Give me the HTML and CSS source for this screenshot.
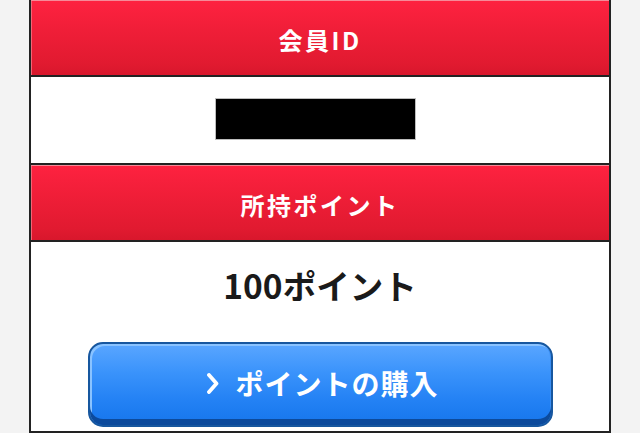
FILE: index.html
```html
<!DOCTYPE html>
<html lang="ja">
<head>
<meta charset="utf-8">
<title>会員情報</title>
<link rel="stylesheet" href="styles.css">
</head>
<body>
<div class="page">
  <div class="panel">
    <div class="head">会員ID</div>
    <div class="cell id-cell">
      <div class="masked"></div>
    </div>
    <div class="head">所持ポイント</div>
    <div class="cell points-cell">
      <div class="points">100ポイント</div>
      <a class="buy" href="#">
        <svg class="chev" width="12" height="21" viewBox="0 0 12 21" aria-hidden="true">
          <path d="M2 2 L9.5 10.5 L2 19" fill="none" stroke="#fff" stroke-width="3.8" stroke-linecap="round" stroke-linejoin="round"/>
        </svg>
        <span>ポイントの購入</span>
      </a>
    </div>
  </div>
</div>
</body>
</html>
```
FILE: styles.css
```css
html, body {
  margin: 0;
  padding: 0;
  background: #f3f3f3;
  font-family: "Noto Sans CJK JP", "Noto Sans", sans-serif;
  overflow: hidden;
}
.page {
  width: 640px;
  height: 433px;
  display: flex;
  justify-content: center;
}
.panel {
  width: 578px;
  margin-top: -2px;
  border-left: 2px solid #222;
  border-right: 2px solid #222;
  border-top: 2px solid #222;
  display: flex;
  flex-direction: column;
  background: #fff;
}
.head {
  height: 77px;
  flex: none;
  border-bottom: 2px solid #222;
  background: linear-gradient(#fe2240 0%, #f01e38 40%, #e11a30 85%, #d8172c 100%);
  box-shadow: inset 0 1px 0 #f58a98, inset 1px 0 0 #f36576;
  color: #fff;
  font-weight: 700;
  font-size: 24px;
  letter-spacing: 2.5px;
  display: flex;
  align-items: center;
  justify-content: center;
  padding-top: 3px;
  box-sizing: border-box;
}
.cell {
  background: #fff;
  border-bottom: 2px solid #222;
}
.id-cell {
  height: 88px;
  flex: none;
  box-sizing: border-box;
  display: flex;
  align-items: center;
  justify-content: center;
}
.masked {
  width: 199px;
  height: 40px;
  background: #000;
  border: 1px solid #bdbdbd;
  margin-right: 9px;
  margin-top: -2px;
}
.points-cell {
  flex: 1;
  display: flex;
  flex-direction: column;
  align-items: center;
  padding-top: 21px;
}
.points {
  font-size: 33.5px;
  font-weight: 700;
  color: #1a1a1a;
  line-height: 44px;
  height: 44px;
}
.buy {
  margin-top: 35px;
  width: 465px;
  height: 85px;
  flex: none;
  box-sizing: border-box;
  border: 2px solid #17579f;
  border-radius: 15px;
  background: linear-gradient(#5aa6ff 0%, #3a93fb 35%, #2381f4 70%, #1676ec 100%);
  box-shadow: inset 0 -6px 0 #0c4a9c, inset 2px 2px 0 #8ac3ff, inset -1px 0 0 #3a8ff5;
  display: flex;
  align-items: center;
  justify-content: center;
  gap: 16px;
  padding: 0 0 4px 6px;
  color: #fff;
  text-decoration: none;
  font-weight: 700;
  font-size: 28px;
  letter-spacing: 1px;
}
.chev {
  display: block;
  margin-top: 2px;
}
```
